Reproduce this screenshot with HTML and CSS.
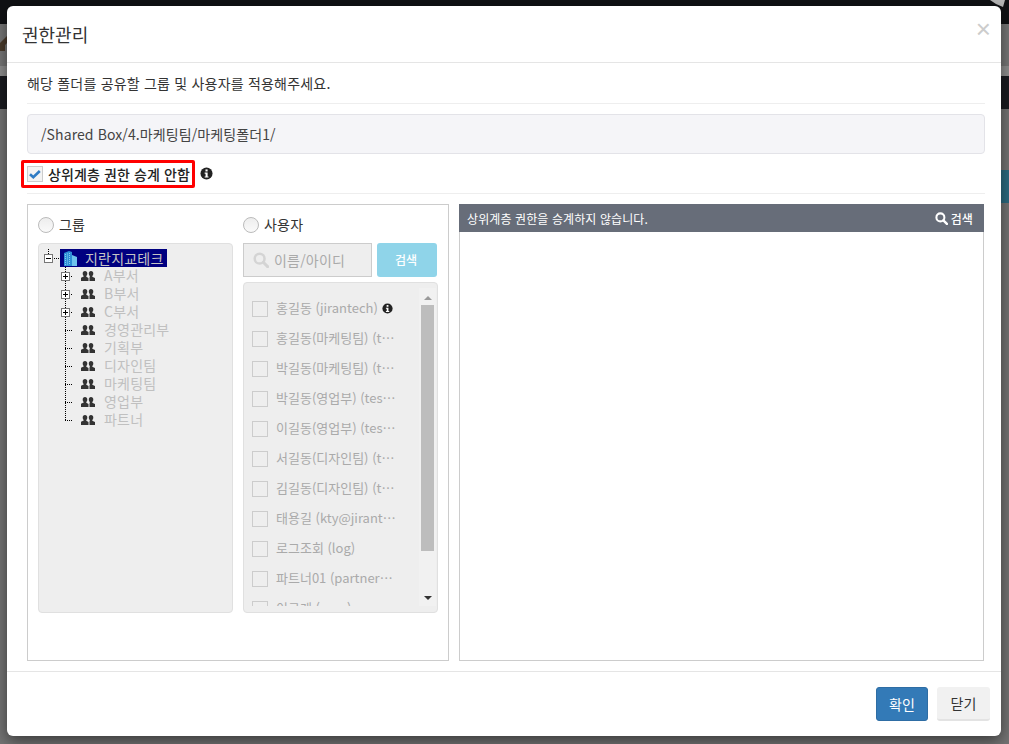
FILE: index.html
```html
<!DOCTYPE html>
<html lang="ko">
<head>
<meta charset="utf-8">
<title>권한관리</title>
<link rel="stylesheet" href="styles.css">
</head>
<body>
<svg class="defs" width="0" height="0" aria-hidden="true">
  <defs>
    <symbol id="info" viewBox="0 0 14 14"><circle cx="7" cy="7" r="6.5" fill="#222"/><rect x="5.9" y="2.6" width="2.3" height="2.2" fill="#fff"/><path d="M5 6h3.2v4.1h1v1.2H5v-1.2h1V7.2H5z" fill="#fff"/></symbol>
    <symbol id="people" viewBox="0 0 14 10"><path d="M4 0c1.500 0 2.300 1 2.300 2.500 0 1-.4 2-1 2.500v.8l2.200 1.200v3H0V6.800l2.700-1.200V5c-.6-.5-1-1.500-1-2.500C1.700 1 2.500 0 4 0z" fill="#333"/><path d="M10 0c1.500 0 2.300 1 2.300 2.500 0 1-.4 2-1 2.500v.8L14 7v3H8.500V6.500L8.800 5.800V5c-.6-.5-1-1.500-1-2.500C7.800 1 8.500 0 10 0z" fill="#333"/></symbol>
    <symbol id="search" viewBox="0 0 14 14"><circle cx="5.800" cy="5.800" r="4.300" fill="none" stroke="currentColor" stroke-width="2.200"/><path d="M9 9l3.800 3.800" stroke="currentColor" stroke-width="2.600" stroke-linecap="round"/></symbol>
    <symbol id="plus" viewBox="0 0 9 9"><rect x=".5" y=".5" width="8" height="8" fill="#fff" stroke="#777"/><path d="M2 4.500h5M4.500 2v5" stroke="#000"/></symbol>
    <symbol id="minus" viewBox="0 0 9 9"><rect x=".5" y=".5" width="8" height="8" fill="#fff" stroke="#777"/><path d="M2 4.500h5" stroke="#000"/></symbol>
  </defs>
</svg>

<div class="backdrop">
  <div class="bd-top"><svg class="bd-corner" width="15" height="7" viewBox="0 0 15 7"><path d="M0 0h15l-2 7-7-3z" fill="#b5b5b5"/></svg></div>
  <div class="bd-mid"><svg class="bd-logo" width="8" height="16" viewBox="0 0 8 16"><path d="M0 8l8-8v7l-3 3v6H0z" fill="#4a3b2c"/></svg></div>
  <div class="bd-light"></div>
  <div class="bd-dark"></div>
  <div class="bd-rest"><span class="bd-teal"></span></div>
</div>

<div class="modal">
  <header class="modal-head">
    <h4 class="modal-title">권한관리</h4>
    <span class="close">×</span>
  </header>

  <div class="modal-body">
    <p class="intro">해당 폴더를 공유할 그룹 및 사용자를 적용해주세요.</p>
    <div class="path">/Shared Box/4.마케팅팀/마케팅폴더1/</div>

    <div class="inherit-row">
      <label class="inherit">
        <span class="check on"><svg viewBox="0 0 16 16" width="16" height="16"><path d="M3 8.200l3.300 3L12.800 5" fill="none" stroke="#2f7bc4" stroke-width="2.600"/></svg></span>
        상위계층 권한 승계 안함
      </label>
      <svg class="info" width="13" height="13"><use href="#info"/></svg>
    </div>

    <div class="panels">
      <section class="left-panel">
        <div class="col col-group">
          <div class="radio-line"><span class="radio"></span>그룹</div>
          <div class="tree">
            <div class="node root">
              <span class="conn conn-root"><svg width="9" height="9"><use href="#minus"/></svg></span>
              <span class="root-label">
                <svg width="13" height="16" viewBox="0 0 13 16"><path d="M0 3l5-2 3 1v14H0z" fill="#2d8fd6"/><path d="M8 5l5 2v9H8z" fill="#6fc4ee"/><path d="M1.500 4v11M3.500 3.500V15M5.500 3v12" stroke="#9fdcf8" stroke-width=".8" stroke-dasharray="1 1"/></svg>
                <span class="root-text">지란지교테크</span>
              </span>
            </div>
            <div class="node"><span class="conn"><svg width="9" height="9"><use href="#plus"/></svg></span><svg class="ppl" width="14" height="10"><use href="#people"/></svg><span class="nlabel">A부서</span></div>
            <div class="node"><span class="conn"><svg width="9" height="9"><use href="#plus"/></svg></span><svg class="ppl" width="14" height="10"><use href="#people"/></svg><span class="nlabel">B부서</span></div>
            <div class="node"><span class="conn"><svg width="9" height="9"><use href="#plus"/></svg></span><svg class="ppl" width="14" height="10"><use href="#people"/></svg><span class="nlabel">C부서</span></div>
            <div class="node"><span class="conn"></span><svg class="ppl" width="14" height="10"><use href="#people"/></svg><span class="nlabel">경영관리부</span></div>
            <div class="node"><span class="conn"></span><svg class="ppl" width="14" height="10"><use href="#people"/></svg><span class="nlabel">기획부</span></div>
            <div class="node"><span class="conn"></span><svg class="ppl" width="14" height="10"><use href="#people"/></svg><span class="nlabel">디자인팀</span></div>
            <div class="node"><span class="conn"></span><svg class="ppl" width="14" height="10"><use href="#people"/></svg><span class="nlabel">마케팅팀</span></div>
            <div class="node"><span class="conn"></span><svg class="ppl" width="14" height="10"><use href="#people"/></svg><span class="nlabel">영업부</span></div>
            <div class="node"><span class="conn conn-last"></span><svg class="ppl" width="14" height="10"><use href="#people"/></svg><span class="nlabel">파트너</span></div>
          </div>
        </div>

        <div class="col col-user">
          <div class="radio-line"><span class="radio"></span>사용자</div>
          <div class="search-row">
            <div class="search-input"><svg width="16" height="16" class="search-ic"><use href="#search"/></svg>이름/아이디</div>
            <button class="search-btn" type="button">검색</button>
          </div>
          <div class="user-list">
            <div class="users">
              <div class="user"><span class="check"></span><span class="uname">홍길동 (jirantech)</span><svg class="uinfo" width="11" height="11"><use href="#info"/></svg></div>
              <div class="user"><span class="check"></span><span class="uname">홍길동(마케팅팀) (t⋯</span></div>
              <div class="user"><span class="check"></span><span class="uname">박길동(마케팅팀) (t⋯</span></div>
              <div class="user"><span class="check"></span><span class="uname">박길동(영업부) (tes⋯</span></div>
              <div class="user"><span class="check"></span><span class="uname">이길동(영업부) (tes⋯</span></div>
              <div class="user"><span class="check"></span><span class="uname">서길동(디자인팀) (t⋯</span></div>
              <div class="user"><span class="check"></span><span class="uname">김길동(디자인팀) (t⋯</span></div>
              <div class="user"><span class="check"></span><span class="uname">태용길 (kty@jirant⋯</span></div>
              <div class="user"><span class="check"></span><span class="uname">로그조회 (log)</span></div>
              <div class="user"><span class="check"></span><span class="uname">파트너01 (partner⋯</span></div>
              <div class="user"><span class="check"></span><span class="uname">이규게 (ome)</span></div>
            </div>
            <div class="scrollbar">
              <span class="arrow up"></span>
              <span class="thumb"></span>
              <span class="arrow down"></span>
            </div>
          </div>
        </div>
      </section>

      <section class="right-panel">
        <div class="right-head">
          <span>상위계층 권한을 승계하지 않습니다.</span>
          <span class="right-search"><svg width="13" height="13"><use href="#search"/></svg>검색</span>
        </div>
      </section>
    </div>
  </div>

  <footer class="modal-foot">
    <button class="btn primary" type="button">확인</button>
    <button class="btn plain" type="button">닫기</button>
  </footer>
</div>
</body>
</html>
```
FILE: styles.css
```css
* { box-sizing: border-box; }
html, body { margin: 0; height: 744px; overflow: hidden; }
body {
  position: relative;
  background: #666;
  font-family: "Noto Sans CJK KR", "Noto Sans", sans-serif;
  font-size: 14px;
  letter-spacing: .2px;
  color: #333;
  padding: 6px 8px 8px 7px;
}
.defs { position: absolute; }

/* page dimmed behind the dialog */
.backdrop { position: absolute; inset: 0; display: flex; flex-direction: column; }
.bd-top { height: 24px; background: #101114; display: flex; justify-content: flex-end; }
.bd-corner { margin-right: 4px; }
.bd-mid { height: 42px; background: #777; display: flex; align-items: flex-start; }
.bd-logo { margin-top: 11px; }
.bd-light { height: 10px; background: #8f8f8f; }
.bd-dark { height: 33px; background: #1a1b20; }
.bd-rest { flex: 1; background: #747474; display: flex; justify-content: flex-end; align-items: flex-start; }
.bd-teal { width: 8px; height: 33px; margin-top: 61px; background: #2c6a80; }

.modal {
  position: relative;
  width: 994px;
  height: 730px;
  background: #fff;
  border-radius: 6px;
  box-shadow: 0 5px 15px rgba(0,0,0,.5);
  display: flex;
  flex-direction: column;
}
.modal-head {
  height: 57px;
  flex: none;
  border-bottom: 1px solid #e5e5e5;
  padding: 0 10px 0 15px;
  display: flex;
  align-items: center;
  justify-content: space-between;
}
.modal-title { margin: 0; font-size: 18px; font-weight: 400; line-height: 56px; color: #333; letter-spacing: 0; }
.close { font-family: "Liberation Sans", sans-serif; font-size: 26px; font-weight: 400; color: #ccc; line-height: 1; margin-top: -11px; letter-spacing: 0; }

.modal-body { flex: 1; padding: 0 16px 0 20px; display: flex; flex-direction: column; }
.intro { margin: 0; height: 41px; line-height: 40px; border-bottom: 1px solid #eee; }
.path {
  margin-top: 10px;
  height: 40px;
  flex: none;
  line-height: 38px;
  padding-left: 13px;
  background: #f5f5f8;
  border: 1px solid #e3e3e8;
  border-radius: 4px;
  letter-spacing: .1px;
  color: #444;
}
.inherit-row {
  height: 40px;
  flex: none;
  border-bottom: 1px solid #eee;
  display: flex;
  align-items: flex-start;
  padding-top: 6px;
}
.inherit {
  margin-left: -6px;
  height: 28px;
  width: 174px;
  border: 3px solid #f00;
  border-radius: 2px;
  padding-left: 3px;
  display: flex;
  align-items: center;
  gap: 5px;
  font-weight: 500;
  letter-spacing: .1px;
  color: #222;
  white-space: nowrap;
}
.info { margin: 7px 0 0 5px; }

.check {
  width: 16px;
  height: 16px;
  flex: none;
  border: 1px solid #ccc;
  display: block;
}
.check.on { background: #f3f3f3; }
.check.on svg { display: block; margin: -1px; }

.panels { display: flex; gap: 10px; margin-top: 10px; height: 457px; flex: none; margin-right: 1px; }
.left-panel {
  width: 422px;
  border: 1px solid #ccc;
  padding: 0 10px;
  display: flex;
  gap: 10px;
}
.right-panel { flex: 1; border: 1px solid #ccc; border-top: none; }
.right-head {
  height: 28px;
  margin: 0 -1px;
  background: #676d79;
  color: #fff;
  font-size: 12px;
  letter-spacing: .1px;
  padding: 0 11px 0 8px;
  display: flex;
  align-items: center;
  justify-content: space-between;
}
.right-search { display: flex; align-items: center; gap: 3px; font-weight: 500; }

.col { display: flex; flex-direction: column; }
.col-group { width: 195px; }
.col-user { width: 195px; }
.radio-line { height: 38px; display: flex; align-items: center; gap: 5px; }
.radio {
  width: 16px; height: 16px; flex: none;
  margin-top: 2px;
  border-radius: 50%;
  border: 1px solid #bbb;
  background: linear-gradient(#ededed, #fafafa);
}

.tree {
  height: 370px;
  background: #eee;
  border: 1px solid #e0e0e0;
  border-radius: 4px;
  padding: 5px 0 0 5px;
  color: #c0c0c0;
}
.node { height: 18px; display: flex; align-items: center; padding-left: 15px; }
.node.root { padding-left: 0; }
.conn {
  width: 22px;
  height: 18px;
  flex: none;
  display: flex;
  align-items: center;
  padding-left: 3px;
  margin-left: -1px;
  margin-right: 1px;
  background:
    repeating-linear-gradient(to bottom, #000 0 1px, transparent 1px 2px) 7px 0 / 1px 100% no-repeat,
    repeating-linear-gradient(to right, #000 0 1px, transparent 1px 2px) 7px 9px / 7px 1px no-repeat;
}
.conn-last { background-size: 1px 10px, 7px 1px; }
.conn-root {
  width: 16px;
  margin-left: 0;
  margin-right: 0;
  padding-left: 0;
  background:
    repeating-linear-gradient(to bottom, #000 0 1px, transparent 1px 2px) 4px 0 / 1px 5px no-repeat,
    repeating-linear-gradient(to right, #000 0 1px, transparent 1px 2px) 10px 9px / 5px 1px no-repeat;
}
.root-label {
  height: 18px;
  width: 107px;
  background: #000080;
  color: #c4c4c4;
  display: flex;
  align-items: center;
  padding-left: 4px;
  gap: 8px;
  white-space: nowrap;
}
.ppl { flex: none; margin-right: 9px; }
.nlabel { line-height: 18px; white-space: nowrap; margin-top: -2px; }

.search-row { display: flex; gap: 5px; height: 34px; }
.search-input {
  width: 129px;
  border: 1px solid #ccc;
  background: #eee;
  color: #aaa;
  display: flex;
  align-items: center;
  padding-left: 9px;
  gap: 5px;
  white-space: nowrap;
}
.search-ic { color: #d4d4d4; flex: none; }
.search-btn {
  width: 60px;
  border: none;
  border-radius: 3px;
  background: #8fd4e9;
  color: #fff;
  font: 500 12px "Noto Sans CJK KR", sans-serif;
  padding: 0 2px 2px 0;
}
.user-list {
  margin-top: 5px;
  height: 331px;
  background: #eee;
  border: 1px solid #e0e0e0;
  border-radius: 4px;
  display: flex;
  padding-bottom: 6px;
}
.users { flex: 1; overflow: hidden; padding: 11px 0 0 8px; }
.user { height: 30px; display: flex; align-items: center; color: #aaa; white-space: nowrap; font-size: 13px; letter-spacing: 0; }
.user .check { margin-right: 8px; }
.uname { margin-top: -3px; }
.uinfo { margin: -2px 0 0 4px; }
.scrollbar {
  width: 17px;
  flex: none;
  margin: 5px 1px 0 0;
  background: #f1f1f1;
  display: flex;
  flex-direction: column;
  align-items: center;
}
.thumb { width: 13px; height: 246px; background: #bdbdbd; margin-top: 9px; }
.arrow { width: 0; height: 0; border-left: 4px solid transparent; border-right: 4px solid transparent; }
.arrow.up { border-bottom: 4px solid #999; margin-top: 8px; margin-bottom: -4px; }
.arrow.down { border-top: 4px solid #333; margin-top: auto; margin-bottom: 6px; }

.modal-foot {
  height: 65px;
  flex: none;
  border-top: 1px solid #e5e5e5;
  display: flex;
  justify-content: flex-end;
  align-items: flex-start;
  padding: 15px 11px 0 0;
  gap: 9px;
}
.btn {
  height: 34px;
  border-radius: 3px;
  font: 400 14px "Noto Sans CJK KR", sans-serif;
  padding: 0;
}
.primary { width: 52px; background: #337ab7; border: 1px solid #2e6da4; color: #fff; }
.plain { width: 53px; background: #f1f1f1; border: none; border-bottom: 2px solid #e3e3e3; color: #333; }
```
